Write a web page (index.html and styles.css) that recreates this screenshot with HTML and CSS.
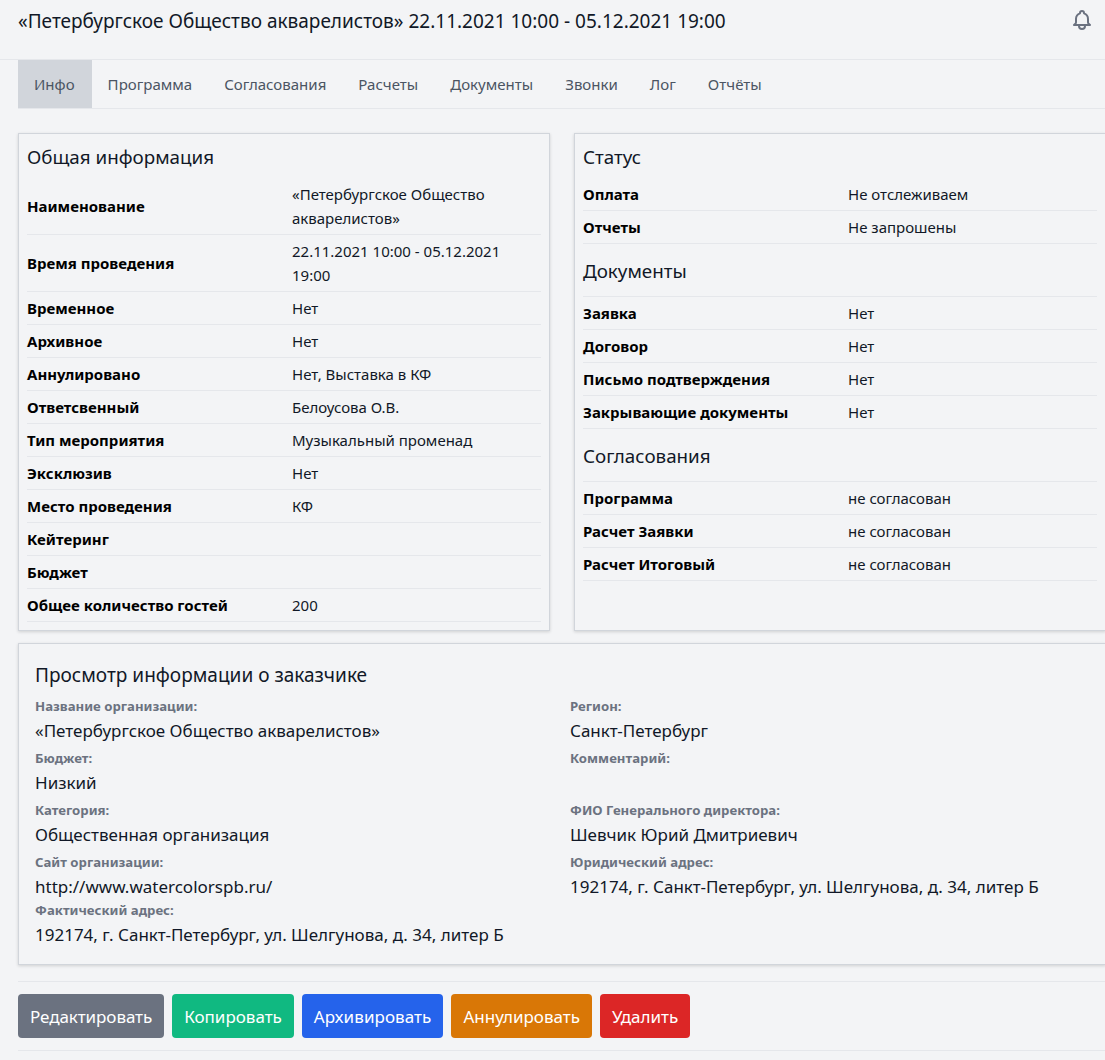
FILE: index.html
```html
<!DOCTYPE html>
<html lang="ru">
<head>
<meta charset="utf-8">
<title>Мероприятие</title>
<link rel="stylesheet" href="styles.css">
</head>
<body>
<header class="top">
  <h1 class="title">«Петербургское Общество акварелистов» 22.11.2021 10:00 - 05.12.2021 19:00</h1>
  <svg class="bell" viewBox="0 0 24 24" fill="none" stroke="currentColor" stroke-width="2" stroke-linecap="round" stroke-linejoin="round"><path d="M15 17h5l-1.405-1.405A2.032 2.032 0 0118 14.158V11a6.002 6.002 0 00-4-5.659V5a2 2 0 10-4 0v.341C7.67 6.165 6 8.388 6 11v3.159c0 .538-.214 1.055-.595 1.436L4 17h5m6 0v1a3 3 0 11-6 0v-1m6 0H9"/></svg>
</header>
<div class="content">
  <nav class="tabs">
    <a class="tab active">Инфо</a>
    <a class="tab">Программа</a>
    <a class="tab">Согласования</a>
    <a class="tab">Расчеты</a>
    <a class="tab">Документы</a>
    <a class="tab">Звонки</a>
    <a class="tab">Лог</a>
    <a class="tab">Отчёты</a>
  </nav>
  <div class="columns">
    <section class="card">
      <h3 class="card-title">Общая информация</h3>
      <div class="row"><b>Наименование</b><span>«Петербургское Общество акварелистов»</span></div>
      <div class="row"><b>Время проведения</b><span>22.11.2021 10:00 - 05.12.2021 19:00</span></div>
      <div class="row"><b>Временное</b><span>Нет</span></div>
      <div class="row"><b>Архивное</b><span>Нет</span></div>
      <div class="row"><b>Аннулировано</b><span>Нет, Выставка в КФ</span></div>
      <div class="row"><b>Ответсвенный</b><span>Белоусова О.В.</span></div>
      <div class="row"><b>Тип мероприятия</b><span>Музыкальный променад</span></div>
      <div class="row"><b>Эксклюзив</b><span>Нет</span></div>
      <div class="row"><b>Место проведения</b><span>КФ</span></div>
      <div class="row"><b>Кейтеринг</b><span></span></div>
      <div class="row"><b>Бюджет</b><span></span></div>
      <div class="row"><b>Общее количество гостей</b><span>200</span></div>
    </section>
    <section class="card">
      <h3 class="card-title">Статус</h3>
      <div class="row"><b>Оплата</b><span>Не отслеживаем</span></div>
      <div class="row"><b>Отчеты</b><span>Не запрошены</span></div>
      <h3 class="card-title sub">Документы</h3>
      <div class="row"><b>Заявка</b><span>Нет</span></div>
      <div class="row"><b>Договор</b><span>Нет</span></div>
      <div class="row"><b>Письмо подтверждения</b><span>Нет</span></div>
      <div class="row"><b>Закрывающие документы</b><span>Нет</span></div>
      <h3 class="card-title sub">Согласования</h3>
      <div class="row"><b>Программа</b><span>не согласован</span></div>
      <div class="row"><b>Расчет Заявки</b><span>не согласован</span></div>
      <div class="row"><b>Расчет Итоговый</b><span>не согласован</span></div>
    </section>
  </div>
  <section class="card customer">
    <h3 class="customer-title">Просмотр информации о заказчике</h3>
    <div class="fields">
      <div class="field"><label>Название организации:</label><p>«Петербургское Общество акварелистов»</p></div>
      <div class="field"><label>Регион:</label><p>Санкт-Петербург</p></div>
      <div class="field"><label>Бюджет:</label><p>Низкий</p></div>
      <div class="field"><label>Комментарий:</label><p></p></div>
      <div class="field"><label>Категория:</label><p>Общественная организация</p></div>
      <div class="field"><label>ФИО Генерального директора:</label><p>Шевчик Юрий Дмитриевич</p></div>
      <div class="field tight"><label>Сайт организации:</label><p>http://www.watercolorspb.ru/</p></div>
      <div class="field tight"><label>Юридический адрес:</label><p>192174, г. Санкт-Петербург, ул. Шелгунова, д. 34, литер Б</p></div>
      <div class="field"><label>Фактический адрес:</label><p>192174, г. Санкт-Петербург, ул. Шелгунова, д. 34, литер Б</p></div>
    </div>
  </section>
  <div class="actions">
    <button class="btn gray">Редактировать</button>
    <button class="btn green">Копировать</button>
    <button class="btn blue">Архивировать</button>
    <button class="btn orange">Аннулировать</button>
    <button class="btn red">Удалить</button>
  </div>
</div>
</body>
</html>
```

FILE: styles.css
```css
* { box-sizing: border-box; }
html, body { margin: 0; padding: 0; height: 1060px; overflow: hidden; }
body {
  background: #f3f4f6;
  color: #000;
  font-family: "Noto Sans", "Open Sans", sans-serif;
  font-size: 15px;
  line-height: 24px;
}
.top {
  height: 60px;
  border-bottom: 1px solid #e5e7eb;
  padding: 9px 11px 0 18px;
  display: flex;
  justify-content: space-between;
  align-items: flex-start;
}
.title { margin: 0; font-size: 19px; line-height: 24px; font-weight: 400; color: #111827; }
.bell { width: 24px; height: 24px; margin-top: -1px; color: #6b7280; }
.content { width: 1088px; margin-left: 18px; }
.tabs { display: flex; height: 49px; border-bottom: 1px solid #e5e7eb; margin-right: -18px; }
.tab { padding: 0 16px; line-height: 49px; font-size: 15.04px; color: #4b5563; }
.tab.active { background: #d1d5db; height: 48px; padding-right: 17px; }
.columns { display: grid; grid-template-columns: 532px 532px; gap: 24px; margin-top: 24px; }
.card {
  background: #f3f4f6;
  border: 1px solid #d1d5db;
  box-shadow: 0 1px 3px rgba(0,0,0,.15);
  padding: 8px;
  height: 498px;
}
.card-title { margin: 0; padding: 1px 0 7px; font-size: 18.8px; line-height: 28px; font-weight: 400; color: #111827; }
.card-title.sub { padding: 13px 0 0; height: 53px; border-bottom: 1px solid #e5e7eb; }
.row {
  display: grid;
  grid-template-columns: 265px 1fr;
  align-items: center;
  padding: 4px 0;
  border-bottom: 1px solid #e5e7eb;
  color: #111827;
}
.row b { color: #000; font-weight: 700; }
.customer { margin-top: 12px; height: 322px; padding: 16px; }
.customer-title { margin: 0; padding: 1px 0 9px; font-size: 19.05px; line-height: 28px; font-weight: 400; color: #111827; }
.fields { display: grid; grid-template-columns: 519px 519px; column-gap: 16px; }
.field { height: 52px; }
.field.tight { height: 48px; }
.field label { display: block; font-size: 13.2px; line-height: 16px; font-weight: 700; color: #6b7280; }
.field p { margin: 5px 0 0; font-size: 17px; line-height: 24px; color: #111827; }
.actions {
  display: flex;
  gap: 8px;
  margin-top: 16px;
  padding: 12px 0;
  height: 70px;
  border-top: 1px solid #e5e7eb;
  border-bottom: 1px solid #e5e7eb;
}
.btn {
  height: 44px;
  padding: 0 12px;
  border: 0;
  border-radius: 4px;
  color: #fff;
  font-family: inherit;
  font-size: 17px;
}
.gray { background: #6b7280; letter-spacing: -.07px; }
.green { background: #10b981; }
.blue { background: #2563eb; letter-spacing: .07px; }
.orange { background: #d97706; }
.red { background: #dc2626; }
```
